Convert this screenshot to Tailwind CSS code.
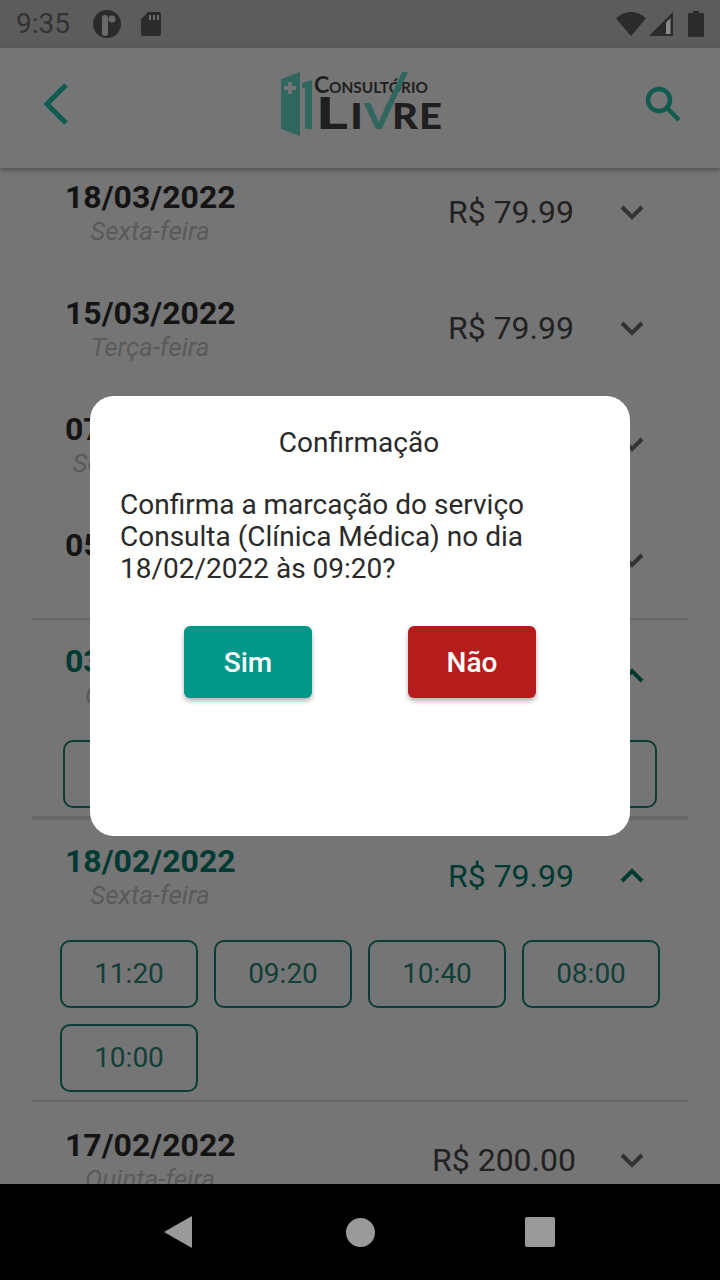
<!DOCTYPE html>
<html lang="pt-BR">
<head>
<meta charset="UTF-8">
<meta name="viewport" content="width=device-width, initial-scale=1.0">
<title>Consultório Livre</title>
<script src="https://cdn.jsdelivr.net/npm/@tailwindcss/browser@4"></script>
</head>
<body class="bg-[#757575] font-['Roboto',sans-serif]">
<div class="relative w-[720px] h-[1280px] overflow-hidden flex flex-col bg-[#757575]">

  <!-- status bar -->
  <div class="h-12 shrink-0 bg-[#5c5c5c] flex items-center pl-4 pr-4 text-[#2b2b2b]">
    <span class="text-[28px] leading-none w-[77px] text-[#333333]">9:35</span>
    <svg class="w-7 h-7" viewBox="0 0 28 28"><circle cx="14" cy="14" r="14" fill="#2b2b2b"/><rect x="9" y="5" width="6" height="21" rx="3" fill="#6a6a6a"/><circle cx="19" cy="9" r="3.500" fill="#6a6a6a"/></svg>
    <svg class="w-5 h-6 ml-5" viewBox="0 0 20 24"><path d="M7 0h11a2 2 0 0 1 2 2v20a2 2 0 0 1-2 2H2a2 2 0 0 1-2-2V7z" fill="#2b2b2b"/><path d="M8 3h2v5H8zM12 3h2v5h-2zM16 3h2v5h-2z" fill="#6b6b6b"/></svg>
    <div class="ml-auto flex items-center">
      <svg class="w-[30px] h-6" viewBox="0 0 30 24"><path d="M15 24 0 6.500C4 2.500 9 0 15 0s11 2.500 15 6.500z" fill="#2b2b2b"/></svg>
      <svg class="w-6 h-6 ml-[3px]" viewBox="0 0 24 24"><path d="M24 0v24H0z" fill="#2b2b2b"/><path d="M17 10.500 21.500 6v16H17z" fill="#8a8a8a"/></svg>
      <svg class="w-4 h-[26px] ml-[15px]" viewBox="0 0 16 26"><path d="M5 0h6v2h3.500A1.500 1.500 0 0 1 16 3.500v21a1.500 1.500 0 0 1-1.500 1.500h-13A1.500 1.500 0 0 1 0 24.500v-21A1.500 1.500 0 0 1 1.500 2H5z" fill="#2b2b2b"/></svg>
    </div>
  </div>

  <!-- app bar -->
  <header class="relative z-10 h-[120px] shrink-0 bg-[#757575] shadow-[0_2px_5px_rgba(0,0,0,0.35)] flex items-center justify-between px-[42px] pb-2">
    <svg class="w-[28px] h-[44px]" viewBox="0 0 28 44" fill="none"><path d="M24 3 5 22l19 19" stroke="#105a4f" stroke-width="5"/></svg>
    <svg class="absolute left-[270px] top-[20px] w-[180px] h-[72px]" viewBox="270 68 180 72">
      <path d="M281 79 300 72v64l-19-7z" fill="#2f665e"/>
      <path d="M288 82h4v4h4v4h-4v4h-4v-4h-4v-4h4z" fill="#757575"/>
      <path d="M302 83 312 80v49h-7V88h-3z" fill="#2f665e"/>
      <text x="314" y="93" font-family="Lato, sans-serif" font-size="23" font-weight="700" fill="#1f1f1f">C</text>
      <text x="329" y="93" font-family="Lato, sans-serif" font-size="16" font-weight="700" fill="#1f1f1f" textLength="99" lengthAdjust="spacingAndGlyphs">ONSULTÓRIO</text>
      <g font-family="Lato, sans-serif" font-weight="900" fill="#1f1f1f">
        <text x="316" y="129" font-size="43" textLength="32" lengthAdjust="spacingAndGlyphs">L</text>
        <text x="350" y="129" font-size="36" textLength="13" lengthAdjust="spacingAndGlyphs">I</text>
        <text x="364" y="129" font-size="36" fill="#2f665e" textLength="29" lengthAdjust="spacingAndGlyphs">V</text>
        <text x="392" y="129" font-size="36" textLength="26" lengthAdjust="spacingAndGlyphs">R</text>
        <text x="419" y="129" font-size="36" textLength="23" lengthAdjust="spacingAndGlyphs">E</text>
      </g>
      <path d="M387 104 402 72h6l-15 32z" fill="#2f665e"/>
    </svg>
    <svg class="w-[38px] h-[38px] mr-[-4px]" viewBox="0 0 38 38" fill="none" stroke="#105a4f" stroke-width="4.500"><circle cx="15" cy="15" r="11"/><path d="m23 23 12 12"/></svg>
  </header>

  <!-- list -->
  <main class="relative flex-1 overflow-hidden pt-[11px]">
    <div class="flex items-center h-[68px] mb-12 pl-[65px]">
      <div class="w-[170px] text-center shrink-0"><p class="text-[32px] leading-9 font-bold text-[#141414] whitespace-nowrap">18/03/2022</p><p class="text-[26px] leading-8 italic text-[#5a5a5a] whitespace-nowrap">Sexta-feira</p></div>
      <span class="w-[339px] mb-0.5 text-right text-[32px] text-[#222222] whitespace-nowrap">R$ 79.99</span>
      <svg class="w-6 h-4 ml-[46px] mb-0.5" viewBox="0 0 24 16" fill="none"><path d="m2 3 10 10L22 3" stroke="#333333" stroke-width="4"/></svg>
    </div>
    <div class="flex items-center h-[68px] mb-12 pl-[65px]">
      <div class="w-[170px] text-center shrink-0"><p class="text-[32px] leading-9 font-bold text-[#141414] whitespace-nowrap">15/03/2022</p><p class="text-[26px] leading-8 italic text-[#5a5a5a] whitespace-nowrap">Terça-feira</p></div>
      <span class="w-[339px] mb-0.5 text-right text-[32px] text-[#222222] whitespace-nowrap">R$ 79.99</span>
      <svg class="w-6 h-4 ml-[46px] mb-0.5" viewBox="0 0 24 16" fill="none"><path d="m2 3 10 10L22 3" stroke="#333333" stroke-width="4"/></svg>
    </div>
    <div class="flex items-center h-[68px] mb-12 pl-[65px]">
      <div class="w-[170px] text-center shrink-0"><p class="text-[32px] leading-9 font-bold text-[#141414] whitespace-nowrap">07/03/2022</p><p class="text-[26px] leading-8 italic text-[#5a5a5a] whitespace-nowrap">Segunda-feira</p></div>
      <span class="w-[339px] mb-0.5 text-right text-[32px] text-[#222222] whitespace-nowrap">R$ 79.99</span>
      <svg class="w-6 h-4 ml-[46px] mb-0.5" viewBox="0 0 24 16" fill="none"><path d="m2 3 10 10L22 3" stroke="#333333" stroke-width="4"/></svg>
    </div>
    <div class="flex items-center h-[68px] mb-[23px] pl-[65px]">
      <div class="w-[170px] text-center shrink-0"><p class="text-[32px] leading-9 font-bold text-[#141414] whitespace-nowrap">05/03/2022</p><p class="text-[26px] leading-8 italic text-[#5a5a5a] whitespace-nowrap">Sábado</p></div>
      <span class="w-[339px] mb-0.5 text-right text-[32px] text-[#222222] whitespace-nowrap">R$ 79.99</span>
      <svg class="w-6 h-4 ml-[46px] mb-0.5" viewBox="0 0 24 16" fill="none"><path d="m2 3 10 10L22 3" stroke="#333333" stroke-width="4"/></svg>
    </div>
    <div class="mx-8 h-0.5 bg-[#686868]"></div>

    <div class="flex items-center h-[68px] mt-[23px] pl-[65px]">
      <div class="w-[170px] text-center shrink-0"><p class="text-[32px] leading-9 font-bold text-[#003a32] whitespace-nowrap">03/02/2022</p><p class="text-[26px] leading-8 italic text-[#5a5a5a] whitespace-nowrap">Quinta-feira</p></div>
      <span class="w-[339px] mb-0.5 text-right text-[32px] text-[#003a32] whitespace-nowrap">R$ 79.99</span>
      <svg class="w-6 h-4 ml-[46px] mb-0.5" viewBox="0 0 24 16" fill="none"><path d="m2 13 10-10 10 10" stroke="#003a32" stroke-width="4"/></svg>
    </div>
    <div class="mt-[29px] ml-[63px] w-[594px] h-[68px] rounded-[10px] border-2 border-[#0a3d35]"></div>
    <div class="mt-2 mx-8 h-1 bg-[#686868]"></div>

    <div class="flex items-center h-[68px] mt-[23px] pl-[65px]">
      <div class="w-[170px] text-center shrink-0"><p class="text-[32px] leading-9 font-bold text-[#003a32] whitespace-nowrap">18/02/2022</p><p class="text-[26px] leading-8 italic text-[#5a5a5a] whitespace-nowrap">Sexta-feira</p></div>
      <span class="w-[339px] mb-0.5 text-right text-[32px] text-[#003a32] whitespace-nowrap">R$ 79.99</span>
      <svg class="w-6 h-4 ml-[46px] mb-0.5" viewBox="0 0 24 16" fill="none"><path d="m2 13 10-10 10 10" stroke="#003a32" stroke-width="4"/></svg>
    </div>
    <div class="mt-[29px] ml-[60px] grid grid-cols-[138px_138px_138px_138px] gap-x-4 gap-y-4 text-[28px] text-[#123f37]">
      <div class="h-[68px] rounded-[10px] border-2 border-[#0a3d35] flex items-center justify-center">11:20</div>
      <div class="h-[68px] rounded-[10px] border-2 border-[#0a3d35] flex items-center justify-center">09:20</div>
      <div class="h-[68px] rounded-[10px] border-2 border-[#0a3d35] flex items-center justify-center">10:40</div>
      <div class="h-[68px] rounded-[10px] border-2 border-[#0a3d35] flex items-center justify-center">08:00</div>
      <div class="h-[68px] rounded-[10px] border-2 border-[#0a3d35] flex items-center justify-center">10:00</div>
    </div>
    <div class="mt-2 mx-8 h-0.5 bg-[#686868]"></div>

    <div class="flex items-center h-[68px] mt-[25px] pl-[65px]">
      <div class="w-[170px] text-center shrink-0"><p class="text-[32px] leading-9 font-bold text-[#141414] whitespace-nowrap">17/02/2022</p><p class="text-[26px] leading-8 italic text-[#5a5a5a] whitespace-nowrap">Quinta-feira</p></div>
      <span class="w-[341px] mb-0.5 text-right text-[32px] text-[#222222] whitespace-nowrap">R$ 200.00</span>
      <svg class="w-6 h-4 ml-[44px] mb-0.5" viewBox="0 0 24 16" fill="none"><path d="m2 3 10 10L22 3" stroke="#333333" stroke-width="4"/></svg>
    </div>
  </main>

  <!-- android nav -->
  <nav class="h-24 shrink-0 bg-black flex items-center relative z-10">
    <svg class="w-7 h-8 ml-[164px]" viewBox="0 0 28 32"><path d="M28 1v30q0 1-1 .5L0 16 27 .5q1-.5 1 .5z" fill="#9a9a9a"/></svg>
    <span class="w-[29px] h-[29px] rounded-full bg-[#9a9a9a] ml-[154px]"></span>
    <span class="w-[30px] h-[30px] rounded-[2px] bg-[#9a9a9a] ml-[150px]"></span>
  </nav>

  <!-- dialog -->
  <div class="absolute left-[90px] top-[396px] w-[540px] h-[440px] bg-white rounded-3xl pl-[30px] pr-[30px] text-[#2a2a2a]">
    <h2 class="mt-[31px] pr-0.5 text-center text-[28px] leading-8">Confirmação</h2>
    <p class="mt-[30px] text-[28px] leading-8">Confirma a marcação do serviço Consulta (Clínica Médica) no dia 18/02/2022 às 09:20?</p>
    <div class="mt-[41px] flex justify-between px-[64px]">
      <button class="w-32 h-[72px] pt-0.5 rounded-md bg-[#009688] text-white text-[28px] font-medium shadow-[0_3px_5px_rgba(0,0,0,0.3)]">Sim</button>
      <button class="w-32 h-[72px] pt-0.5 rounded-md bg-[#b71c1c] text-white text-[28px] font-medium shadow-[0_3px_5px_rgba(0,0,0,0.3)]">Não</button>
    </div>
  </div>
</div>
</body>
</html>
